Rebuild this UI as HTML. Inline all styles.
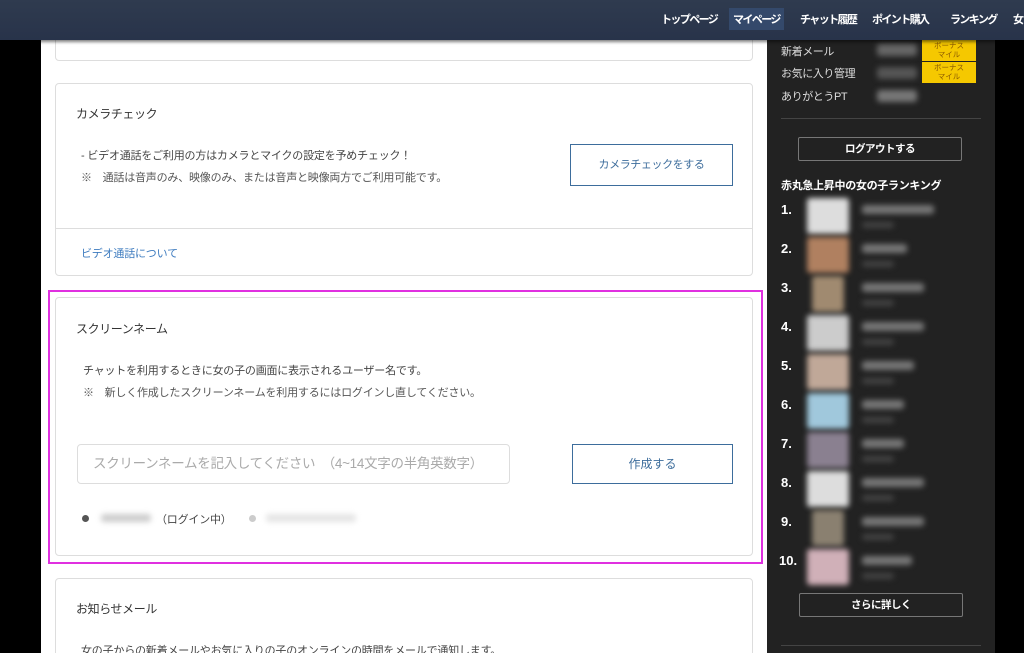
<!DOCTYPE html>
<html><head><meta charset="utf-8"><style>
*{box-sizing:border-box;margin:0;padding:0}
html,body{width:1024px;height:653px;overflow:hidden}
body{background:#000;font-family:"Liberation Sans","Noto Sans CJK JP",sans-serif;position:relative;color:#333}
.nav{position:absolute;left:0;top:0;width:1024px;height:40px;background:linear-gradient(#2f3b4f,#28334a);box-shadow:0 2px 3px rgba(0,0,0,.5);z-index:5}
.nav span{position:absolute;top:11px;font-size:11px;letter-spacing:-1.6px;color:#fff;font-weight:bold;white-space:nowrap}
.main{position:absolute;left:41px;top:0;width:726px;height:653px;background:#fff;overflow:hidden}
.card{position:absolute;left:14px;width:698px;border:1px solid #ddd;border-radius:4px;background:#fff}
.t{position:absolute;font-size:12px;letter-spacing:-0.4px;color:#333;white-space:nowrap}
.s{position:absolute;font-size:11px;letter-spacing:-0.2px;color:#444;white-space:nowrap}
.btn{position:absolute;border:1px solid #3d6d9c;color:#3d6d9c;font-size:12px;text-align:center;background:#fff}
.side{position:absolute;left:767px;top:0;width:228px;height:653px;background:#222}
.side .l{position:absolute;font-size:11px;letter-spacing:-0.4px;color:#ddd;white-space:nowrap}
.blur{position:absolute;filter:blur(3px);border-radius:3px}
.sbtn{position:absolute;border:1px solid #777;border-radius:2px;color:#fff;font-size:10.5px;letter-spacing:-0.5px;text-align:center;font-weight:bold}
.bonus{position:absolute;left:155px;width:54px;height:21px;background:#f5c800;color:#8a5a00;font-size:7.5px;line-height:9px;text-align:center;padding-top:1px}
.n{position:absolute;left:14px;font-size:13px;color:#fff;font-weight:bold}
</style></head><body>
<div class="nav">
<span style="left:661px">トップページ</span>
<span style="left:729px;top:8px;padding:3px 4px;background:#34496b;color:#fff">マイページ</span>
<span style="left:800px">チャット履歴</span>
<span style="left:872px">ポイント購入</span>
<span style="left:950px">ランキング</span>
<span style="left:1013px">女</span>
</div>
<div class="main">
<div class="card" style="top:20px;height:41px"></div>
<div class="card" style="top:83px;height:193px">
<div class="t" style="left:20px;top:21px">カメラチェック</div>
<div class="s" style="left:25px;top:63px">- ビデオ通話をご利用の方はカメラとマイクの設定を予めチェック！</div>
<div class="s" style="left:25px;top:85px;color:#555">※　通話は音声のみ、映像のみ、または音声と映像両方でご利用可能です。</div>
<div class="btn" style="left:514px;top:60px;width:163px;height:42px;line-height:40px;font-size:11px;letter-spacing:-0.4px">カメラチェックをする</div>
<div style="position:absolute;left:0;right:0;top:144px;border-top:1px solid #ddd"></div>
<div class="s" style="left:25px;top:161px;color:#3d7bbf">ビデオ通話について</div>
</div>
<div style="position:absolute;left:7px;top:290px;width:715px;height:274px;border:2px solid #e030e0"></div>
<div class="card" style="top:297px;height:259px">
<div class="t" style="left:20px;top:22px">スクリーンネーム</div>
<div class="s" style="left:27px;top:64px">チャットを利用するときに女の子の画面に表示されるユーザー名です。</div>
<div class="s" style="left:27px;top:86px;color:#555">※　新しく作成したスクリーンネームを利用するにはログインし直してください。</div>
<div style="position:absolute;left:21px;top:146px;width:433px;height:40px;border:1px solid #ddd;border-radius:4px;font-size:13.5px;letter-spacing:-0.3px;color:#aaa;line-height:38px;padding-left:15px;white-space:nowrap">スクリーンネームを記入してください　（4~14文字の半角英数字）</div>
<div class="btn" style="left:516px;top:146px;width:161px;height:40px;line-height:38px">作成する</div>
<div style="position:absolute;left:26px;top:217px;width:7px;height:7px;border-radius:50%;background:#555"></div>
<div class="blur" style="left:45px;top:216px;width:50px;height:8px;background:#ccc"></div>
<div class="s" style="left:100px;top:213px">（ログイン中）</div>
<div style="position:absolute;left:193px;top:217px;width:7px;height:7px;border-radius:50%;background:#ccc"></div>
<div class="blur" style="left:210px;top:216px;width:90px;height:8px;background:#e4e4e4"></div>
</div>
<div class="card" style="top:578px;height:90px">
<div class="t" style="left:20px;top:21px">お知らせメール</div>
<div class="s" style="left:25px;top:63px">女の子からの新着メールやお気に入りの子のオンラインの時間をメールで通知します。</div>
</div>
</div>
<div class="side">
<div class="l" style="left:14px;top:43px">新着メール</div>
<div class="l" style="left:14px;top:65px">お気に入り管理</div>
<div class="l" style="left:14px;top:88px">ありがとうPT</div>
<div class="blur" style="left:110px;top:44px;width:40px;height:12px;background:#666"></div>
<div class="blur" style="left:110px;top:67px;width:40px;height:12px;background:#555"></div>
<div class="blur" style="left:110px;top:90px;width:40px;height:12px;background:#777"></div>
<div class="bonus" style="top:40px">ボーナス<br>マイル</div>
<div class="bonus" style="top:62px">ボーナス<br>マイル</div>
<div style="position:absolute;left:14px;top:118px;width:200px;border-top:1px solid #444"></div>
<div class="sbtn" style="left:31px;top:137px;width:164px;height:24px;line-height:22px">ログアウトする</div>
<div class="l" style="left:14px;top:177px;color:#fff;font-weight:bold;font-size:11px;letter-spacing:-0.3px">赤丸急上昇中の女の子ランキング</div>
<div class="n" style="top:202px">1.</div><div class="blur" style="left:40px;top:198px;width:42px;height:36px;background:#ddd"></div><div class="blur" style="left:95px;top:205px;width:72px;height:9px;background:#777"></div><div class="blur" style="left:95px;top:222px;width:32px;height:6px;background:#444"></div>
<div class="n" style="top:241px">2.</div><div class="blur" style="left:40px;top:237px;width:42px;height:36px;background:#b08060"></div><div class="blur" style="left:95px;top:244px;width:45px;height:9px;background:#777"></div><div class="blur" style="left:95px;top:261px;width:32px;height:6px;background:#444"></div>
<div class="n" style="top:280px">3.</div><div class="blur" style="left:45px;top:276px;width:32px;height:36px;background:#a08a70"></div><div class="blur" style="left:95px;top:283px;width:62px;height:9px;background:#777"></div><div class="blur" style="left:95px;top:300px;width:32px;height:6px;background:#444"></div>
<div class="n" style="top:319px">4.</div><div class="blur" style="left:40px;top:315px;width:42px;height:36px;background:#ccc"></div><div class="blur" style="left:95px;top:322px;width:62px;height:9px;background:#777"></div><div class="blur" style="left:95px;top:339px;width:32px;height:6px;background:#444"></div>
<div class="n" style="top:358px">5.</div><div class="blur" style="left:40px;top:354px;width:42px;height:36px;background:#c0a898"></div><div class="blur" style="left:95px;top:361px;width:52px;height:9px;background:#777"></div><div class="blur" style="left:95px;top:378px;width:32px;height:6px;background:#444"></div>
<div class="n" style="top:397px">6.</div><div class="blur" style="left:40px;top:393px;width:42px;height:36px;background:#a0c8dc"></div><div class="blur" style="left:95px;top:400px;width:42px;height:9px;background:#777"></div><div class="blur" style="left:95px;top:417px;width:32px;height:6px;background:#444"></div>
<div class="n" style="top:436px">7.</div><div class="blur" style="left:40px;top:432px;width:42px;height:36px;background:#8a8090"></div><div class="blur" style="left:95px;top:439px;width:42px;height:9px;background:#777"></div><div class="blur" style="left:95px;top:456px;width:32px;height:6px;background:#444"></div>
<div class="n" style="top:475px">8.</div><div class="blur" style="left:40px;top:471px;width:42px;height:36px;background:#ddd"></div><div class="blur" style="left:95px;top:478px;width:62px;height:9px;background:#777"></div><div class="blur" style="left:95px;top:495px;width:32px;height:6px;background:#444"></div>
<div class="n" style="top:514px">9.</div><div class="blur" style="left:45px;top:510px;width:32px;height:36px;background:#8a8070"></div><div class="blur" style="left:95px;top:517px;width:62px;height:9px;background:#777"></div><div class="blur" style="left:95px;top:534px;width:32px;height:6px;background:#444"></div>
<div class="n" style="top:553px;left:12px">10.</div><div class="blur" style="left:40px;top:549px;width:42px;height:36px;background:#d0b0b8"></div><div class="blur" style="left:95px;top:556px;width:50px;height:9px;background:#777"></div><div class="blur" style="left:95px;top:573px;width:32px;height:6px;background:#444"></div>
<div class="sbtn" style="left:32px;top:593px;width:164px;height:24px;line-height:22px">さらに詳しく</div>
<div style="position:absolute;left:14px;top:645px;width:200px;border-top:1px solid #444"></div>
</div>
</body></html>
